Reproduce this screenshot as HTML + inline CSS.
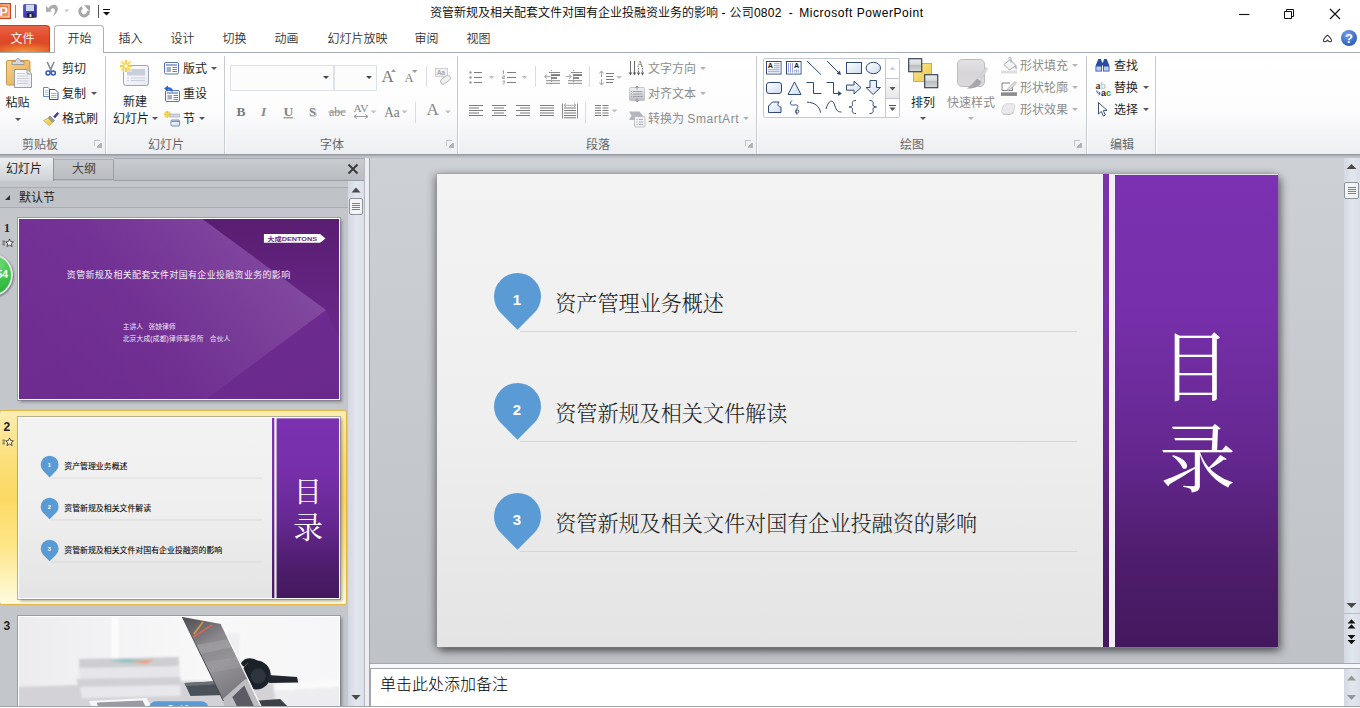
<!DOCTYPE html>
<html lang="zh-CN">
<head>
<meta charset="utf-8">
<title>PowerPoint</title>
<style>
*{box-sizing:border-box;margin:0;padding:0}
html,body{width:1360px;height:708px;overflow:hidden;background:#fff}
body{position:relative;font-family:"Liberation Sans","Noto Sans CJK SC",sans-serif;font-size:12px;color:#1e1e1e}
.a{position:absolute}
.t{position:absolute;white-space:nowrap;line-height:16px;font-size:12px}
.g{color:#8c8c8c}
/* title bar */
#title{left:0;top:0;width:1360px;height:25px;background:#fff}
#titletext{left:430px;top:5px;font-size:12px;color:#000;font-weight:350}
/* tab row */
#tabrow{left:0;top:25px;width:1360px;height:28px;background:#fff}
#filetab{left:0;top:25px;width:50px;height:27px;border-radius:0 4px 0 0;border:1px solid #c43c1c;border-left:none;border-bottom:none;background:radial-gradient(ellipse 40px 10px at 50% 100%,#f59a3c 0%,rgba(245,154,60,0) 100%),linear-gradient(#ea6446 0%,#e04c2c 45%,#d9431f 100%);color:#fff;text-align:center}
#hometab{left:54px;top:25px;width:50px;height:28px;border:1px solid #aab1b9;border-bottom:none;border-radius:4px 4px 0 0;background:#fff}
.tab{top:30.5px;font-size:12px;color:#333;margin-left:.5px;font-weight:350}
/* ribbon */
#ribbon{left:0;top:52px;width:1360px;height:102px;border-top:1px solid #a3aab2;background:linear-gradient(#ffffff 0%,#fdfdfe 55%,#eceef1 100%)}
.sep{top:56px;width:2px;height:98px;border-left:1px solid #c6cad1;border-right:1px solid #fff}
.gl{top:136.5px;color:#666;text-align:center}

.dd{width:0;height:0;border-left:3px solid transparent;border-right:3px solid transparent;border-top:3px solid #555}
.dd.lg{border-top-color:#b4b4b4}
.dl{width:6px;height:6px;border-left:1px solid #c0c4ca;border-top:1px solid #c0c4ca}
.dl:after{content:"";position:absolute;left:2px;top:2px;width:4px;height:4px;background:linear-gradient(135deg,transparent 50%,#aeb2b8 50%);border-right:1px solid #b4b8be;border-bottom:1px solid #b4b8be}
/* below ribbon */
#under{left:0;top:154px;width:1360px;height:4px;background:linear-gradient(#8e949b,#b9bdc3 60%,#c5c9ce)}

/* panel */
#panel{left:0;top:158px;width:365px;height:548px;background:#c3c6cb}
#ptabs{left:0;top:158px;width:365px;height:23px;background:linear-gradient(#c9ccd1,#b8bbc0)}
#ptab1{left:0;top:158px;width:54px;height:23px;background:linear-gradient(#eceef0,#d0d3d7 95%,#c9ccd1);border-right:1px solid #8f959c}
#ptab2{left:54px;top:159px;width:60px;height:21px;background:linear-gradient(#c6c9ce,#b9bcc1);border:1px solid #9ba0a7;border-left:none;border-top-color:#aeb2b8}
#ptabline{left:114px;top:180px;width:251px;height:1px;background:#9ba0a7;box-shadow:0 -22px 0 #a3a8af}
#sechead{left:0;top:187px;width:348px;height:21px;background:#bfc2c7;border-top:1px solid #a9adb3;border-bottom:1px solid #a9adb3}
#pscroll{left:348px;top:181px;width:17px;height:525px;background:linear-gradient(90deg,#d3d8e1,#e2e6ee 50%,#dadfe7)}
#split{left:364px;top:158px;width:6px;height:548px;background:#eceef1;border-left:1px solid #b4b8be;border-right:1px solid #9fa4ab}
#ws{left:370px;top:158px;width:974px;height:506px;background:linear-gradient(#cdd0d5 0%,#c6c9ce 50%,#bfc2c7 100%)}
#vscroll{left:1344px;top:158px;width:16px;height:506px;background:linear-gradient(90deg,#d3d8e1,#e2e6ee 50%,#dadfe7)}
#hsplit{left:370px;top:663px;width:990px;height:6px;background:#f7f8f9;border-top:1px solid #a4a9b0;border-bottom:1px solid #a4a9b0}
#notes{left:370px;top:669px;width:974px;height:37px;background:#fff;border-left:1px solid #a4a9b0}
#nscroll{left:1344px;top:669px;width:16px;height:37px;background:linear-gradient(90deg,#d3d8e1,#e2e6ee 50%,#dadfe7)}
#bottom{left:0;top:706px;width:1360px;height:2px;background:#fff;border-top:1px solid #9fa4ab}
.thumb{left:18px;width:322px;height:182px;border:1px solid #fff;box-shadow:0 0 0 1px rgba(120,125,132,.55),2px 2px 3px rgba(0,0,0,.32)}
#sel{left:-1px;top:410px;width:348px;height:195px;border:1px solid #e3b548;border-radius:3px;background:linear-gradient(180deg,#fdeeb3 0%,#fbdf79 25%,#fcd964 45%,#fde688 70%,#fffbe0 100%)}
.num{font-family:"Liberation Serif","Noto Serif CJK SC",serif;font-weight:bold;font-size:13px;color:#222}
/* slide */
#slide{left:437px;top:174px;width:841px;height:473px;background:linear-gradient(180deg,#f3f3f3 0%,#efefef 50%,#e4e4e4 100%);box-shadow:0 0 0 1px rgba(150,154,160,.35),3px 4px 8px rgba(0,0,0,.48),-3px 1px 8px rgba(0,0,0,.30)}
.purple{background:linear-gradient(180deg,#7b31b1 0%,#762fa9 30%,#652891 58%,#4e1d6c 82%,#44185e 100%)}
.stxt{font-family:"Liberation Serif","Noto Serif CJK SC",serif;font-size:21.1px;line-height:28px;color:#1c1c1c;font-weight:300}
.sline{height:1px;background:#d5d5d5}
.pin{width:47px;height:47px;border-radius:50% 50% 0 50%;background:#5b9bd5;transform:rotate(45deg)}
.pinn{font-family:"Liberation Sans",sans-serif;font-weight:bold;font-size:15px;color:#fff;width:47px;text-align:center;line-height:47px}
.mulu{font-family:"Liberation Serif","Noto Serif CJK SC",serif;font-size:77px;line-height:80px;color:#fff;width:163px;text-align:center;left:1115px}
</style>
</head>
<body>
<div class="a" id="title"></div>
<div class="t" id="titletext">资管新规及相关配套文件对国有企业投融资业务的影响<span id="tt1" style="letter-spacing:.25px"> - 公司0802&nbsp; -&nbsp; </span><span id="tt2" style="letter-spacing:.55px;margin-left:-1px">Microsoft PowerPoint</span></div>
<div class="a" id="tabrow"></div>
<div class="a" id="ribbon"></div>
<div class="a" id="filetab"></div>
<div class="a" id="hometab"></div>
<div class="t tab" style="left:10px;color:#fff">文件</div>
<div class="t tab" style="left:67px">开始</div>
<div class="t tab" style="left:118px">插入</div>
<div class="t tab" style="left:170px">设计</div>
<div class="t tab" style="left:222px">切换</div>
<div class="t tab" style="left:274px">动画</div>
<div class="t tab" style="left:327px">幻灯片放映</div>
<div class="t tab" style="left:414px">审阅</div>
<div class="t tab" style="left:466px">视图</div>

<!-- ribbon group separators -->
<div class="a sep" style="left:105px"></div>
<div class="a sep" style="left:224px"></div>
<div class="a sep" style="left:457px"></div>
<div class="a sep" style="left:756px"></div>
<div class="a sep" style="left:1086px"></div>
<div class="a sep" style="left:1155px"></div>
<!-- clipboard -->
<div class="t" style="left:5.5px;top:95.1px">粘贴</div>
<div class="a dd" style="left:15px;top:118px"></div>
<div class="t" style="left:62px;top:61.1px">剪切</div>
<div class="t" style="left:62px;top:86.1px">复制</div>
<div class="a dd" style="left:91px;top:92px"></div>
<div class="t" style="left:62px;top:111.1px">格式刷</div>
<div class="t gl" style="left:22px">剪贴板</div>
<div class="a dl" style="left:94px;top:140px"></div>
<!-- slides -->
<div class="t" style="left:123px;top:94.1px">新建</div>
<div class="t" style="left:113px;top:111.1px">幻灯片</div>
<div class="a dd" style="left:152px;top:117px"></div>
<div class="t" style="left:183px;top:61.1px">版式</div>
<div class="a dd" style="left:211px;top:67px"></div>
<div class="t" style="left:183px;top:86.1px">重设</div>
<div class="t" style="left:183px;top:111.1px">节</div>
<div class="a dd" style="left:199px;top:117px"></div>
<div class="t gl" style="left:148px">幻灯片</div>
<!-- font -->
<div class="a" style="left:230px;top:65px;width:104px;height:26px;border:1px solid #dde1e8;background:#fcfcfd"></div>
<div class="a" style="left:334px;top:65px;width:43px;height:26px;border:1px solid #dde1e8;background:#fcfcfd"></div>
<div class="a dd" style="left:323px;top:76px;border-top-color:#444"></div>
<div class="a dd" style="left:366px;top:76px;border-top-color:#444"></div>
<div class="t gl" style="left:320px">字体</div>
<div class="a dl" style="left:446px;top:140px"></div>
<!-- paragraph -->
<div class="t g" style="left:648px;top:61.1px">文字方向</div>
<div class="a dd lg" style="left:700px;top:67px"></div>
<div class="t g" style="left:648px;top:86.1px">对齐文本</div>
<div class="a dd lg" style="left:700px;top:92px"></div>
<div class="t g" style="left:648px;top:111.1px">转换为 <span style="letter-spacing:.55px">SmartArt</span></div>
<div class="a dd lg" style="left:743px;top:117px"></div>
<div class="t gl" style="left:586px">段落</div>
<div class="a dl" style="left:745px;top:140px"></div>
<!-- drawing -->
<div class="t" style="left:911px;top:94.6px">排列</div>
<div class="a dd" style="left:920px;top:117px"></div>
<div class="t g" style="left:947px;top:94.6px">快速样式</div>
<div class="a dd lg" style="left:968px;top:117px"></div>
<div class="t g" style="left:1020px;top:58.1px">形状填充</div>
<div class="a dd lg" style="left:1072px;top:64px"></div>
<div class="t g" style="left:1020px;top:80.1px">形状轮廓</div>
<div class="a dd lg" style="left:1072px;top:86px"></div>
<div class="t g" style="left:1020px;top:102.1px">形状效果</div>
<div class="a dd lg" style="left:1072px;top:108px"></div>
<div class="t gl" style="left:900px">绘图</div>
<div class="a dl" style="left:1074px;top:140px"></div>
<!-- editing -->
<div class="t" style="left:1114px;top:58.1px">查找</div>
<div class="t" style="left:1114px;top:80.1px">替换</div>
<div class="a dd" style="left:1143px;top:86px"></div>
<div class="t" style="left:1114px;top:102.1px">选择</div>
<div class="a dd" style="left:1143px;top:108px"></div>
<div class="t gl" style="left:1110px">编辑</div>

<!-- title bar icons -->
<svg class="a" style="left:0;top:0" width="130" height="25" viewBox="0 0 130 25">
<defs><linearGradient id="ppg" x1="0" y1="0" x2="1" y2="1"><stop offset="0" stop-color="#e5602a"/><stop offset="1" stop-color="#f6a36f"/></linearGradient>
<linearGradient id="svg1" x1="0" y1="0" x2="1" y2="1"><stop offset="0" stop-color="#5a5ad0"/><stop offset="1" stop-color="#2a2a8c"/></linearGradient></defs>
<rect x="-2" y="3.500" width="12.500" height="15" fill="url(#ppg)" stroke="#d4401c"/>
<rect x="-2" y="5" width="11" height="12" fill="none" stroke="#fbe3d4" stroke-width=".800"/>
<text x="-0.500" y="15.500" font-family="'Liberation Sans',sans-serif" font-weight="bold" font-size="12.500" fill="#fff">P</text>
<line x1="15.500" y1="5" x2="15.500" y2="18" stroke="#8a8a8a"/>
<rect x="23.500" y="4.500" width="13" height="13" rx="1" fill="url(#svg1)" stroke="#33338f" stroke-width=".600"/>
<rect x="26" y="4.800" width="8" height="6.200" fill="#e8eef8"/><rect x="26" y="4.800" width="8" height="6.200" fill="#b5c6e6" opacity=".5"/>
<rect x="27" y="13" width="6.500" height="4.500" fill="#23232f"/><rect x="29.500" y="14" width="2" height="3" fill="#d6d6e4"/>
<path d="M46.100 6.100 L46.100 11.900 L51.900 11.600 Z M48.300 8.300 C50 5.300 54.200 3.600 56.600 5.800 C59.200 8.300 57.800 13 52.500 16.700 C55 13 55.600 10.200 54.200 8.800 C53 7.700 51.300 8.600 50.400 10.300 Z" fill="#ababab"/>
<polygon points="64.300,9.500 69.300,9.500 66.800,12.300" fill="#c2c2c2"/>
<path d="M82.300 7.700 A4.300 4.300 0 1 0 88.300 10.850" fill="none" stroke="#a6a6a6" stroke-width="3"/><path d="M83.800 5.200 L90 5.200 L90 11.400 Z" fill="#a6a6a6"/>
<line x1="98.500" y1="5" x2="98.500" y2="18" stroke="#555"/>
<rect x="103" y="9" width="7" height="1" fill="#111"/><polygon points="103,12 110,12 106.500,15.500" fill="#111"/>
</svg>
<!-- window controls -->
<svg class="a" style="left:1220px;top:0" width="140" height="52" viewBox="1220 0 140 52">
<path d="M1239 14.500h10.500" stroke="#111" stroke-width="1.100"/>
<path d="M1284.500 11.500h7v7h-7z M1286.500 11.500v-2h7v7h-2" fill="none" stroke="#111" stroke-width="1"/>
<path d="M1330 9l10 10M1340 9l-10 10" stroke="#111" stroke-width="1.200"/>
<path d="M1323.500 41 C1323 39.500 1325.500 37 1327.500 35.200 C1329.500 37 1332 39.500 1331.500 41 C1331 42.300 1329 42 1327.500 40.200 C1326 42 1324 42.300 1323.500 41 Z" fill="#fff" stroke="#333" stroke-width="1.100"/>
<defs><radialGradient id="hg" cx=".4" cy=".3" r=".8"><stop offset="0" stop-color="#7fa3e6"/><stop offset=".6" stop-color="#3f6fcc"/><stop offset="1" stop-color="#2a55b0"/></radialGradient></defs>
<circle cx="1349" cy="38" r="8" fill="url(#hg)"/>
<text x="1349" y="42.800" text-anchor="middle" font-family="'Liberation Sans',sans-serif" font-weight="bold" font-size="13" fill="#fff">?</text>
</svg>

<!-- ribbon icons -->
<svg class="a" id="ricons" style="left:0;top:52px" width="1360" height="102" viewBox="0 52 1360 102">
<defs>
<linearGradient id="cb" x1="0" y1="0" x2="1" y2="1"><stop offset="0" stop-color="#f6d48f"/><stop offset="1" stop-color="#e3a94f"/></linearGradient>
<linearGradient id="pg" x1="0" y1="0" x2="1" y2="1"><stop offset="0" stop-color="#ffffff"/><stop offset="1" stop-color="#e6e9f0"/></linearGradient>
<linearGradient id="gy" x1="0" y1="0" x2="0" y2="1"><stop offset="0" stop-color="#f2f3f5"/><stop offset="1" stop-color="#b9bcc2"/></linearGradient>
<linearGradient id="yl" x1="0" y1="0" x2="1" y2="1"><stop offset="0" stop-color="#fbe38a"/><stop offset="1" stop-color="#e8c23f"/></linearGradient>
<linearGradient id="bl" x1="0" y1="0" x2="1" y2="1"><stop offset="0" stop-color="#ffffff"/><stop offset="1" stop-color="#cfdcf2"/></linearGradient>
</defs>
<!-- paste -->
<rect x="6.500" y="60.500" width="23.500" height="24.500" rx="1.500" fill="url(#cb)" stroke="#c79642"/>
<path d="M12 64.500 v-3 h3.500 c0-4 5-4 5 0 h3.500 v3 z" fill="#d5d7dc" stroke="#8c8f96" stroke-width=".800"/>
<path d="M14.500 69.500 h12.500 l4.500 4.500 v13.500 h-17 z" fill="url(#pg)" stroke="#8a93a6" stroke-width=".900"/>
<path d="M27 69.500 v4.500 h4.500" fill="#dfe3ec" stroke="#8a93a6" stroke-width=".800"/>
<path d="M17 73.500h8M17 76h11.500M17 78.500h11.500M17 81h11.500M17 83.500h11.500" stroke="#c3c8d3" stroke-width=".900"/>
<!-- cut -->
<path d="M47.300 62 L51.500 71.500 M54 62 L49.800 71.500" stroke="#7d8590" stroke-width="1.500" fill="none"/>
<circle cx="48" cy="73" r="2" fill="none" stroke="#2c56c8" stroke-width="1.500"/><circle cx="53.300" cy="73" r="2" fill="none" stroke="#2c56c8" stroke-width="1.500"/>
<!-- copy -->
<path d="M43.500 87.500 h4.500 l2.500 2.500 v6.500 h-7 z" fill="#fff" stroke="#5a78b8" stroke-width=".900"/>
<path d="M45 90.500h3.500M45 92.500h3.500M45 94.500h3.500" stroke="#7e9bd6" stroke-width=".600"/>
<path d="M49.500 89.500 h5.500 l3 3 v7 h-8.500 z" fill="#fff" stroke="#2a4ea6" stroke-width="1"/>
<path d="M51 93.500h5.500M51 95.500h5.500M51 97.500h5.500" stroke="#5a82d8" stroke-width=".600"/>
<!-- format painter -->
<path d="M53.500 116.500 L57.500 112.300 L58.800 113.600 L55 118 Z" fill="#3a3f9a" stroke="#2a2e78" stroke-width=".500"/>
<path d="M50 116 L54.500 120.500 L52.500 122.500 L48 118 Z" fill="#9a9ca5" stroke="#666a75" stroke-width=".500"/>
<path d="M48 118 L52.500 122.500 L49.500 125.500 C47.500 124.500 45 122 43.500 120.500 Z" fill="url(#yl)" stroke="#b4953a" stroke-width=".600"/>

<!-- new slide -->
<rect x="123.500" y="65.500" width="25" height="20" rx="2" fill="url(#pg)" stroke="#9aa5bf"/>
<rect x="127" y="69" width="18" height="6.500" fill="#c9cedb"/>
<path d="M127 78h2M130.500 78h14.500M127 80.500h2M130.500 80.500h14.500" stroke="#c4cad8" stroke-width=".900"/>
<rect x="120" y="60" width="12" height="12" fill="#fdf3b8" opacity=".55"/>
<path d="M120.0 66.0 L132.0 66.0" stroke="#f2c52e" stroke-width="1.6"/><path d="M126.0 60.0 L126.0 72.0" stroke="#f2c52e" stroke-width="1.6"/><path d="M121.7 61.7 L130.3 70.3" stroke="#f6d24e" stroke-width="1.4"/><path d="M121.7 70.3 L130.3 61.7" stroke="#f6d24e" stroke-width="1.4"/><circle cx="126" cy="66" r="1.800" fill="#fffbe0"/>
<!-- layout -->
<rect x="164.500" y="62.500" width="14" height="11.500" rx="1.500" fill="#fff" stroke="#5674b4"/>
<path d="M166 65h11" stroke="#5674b4" stroke-width="1.200"/>
<rect x="166.500" y="67" width="4.500" height="5" fill="#a9afbe"/>
<path d="M172.500 67.500h4.500M172.500 69.500h4.500M172.500 71.500h4.500" stroke="#5674b4" stroke-width=".900"/>
<!-- reset -->
<rect x="165.500" y="90.500" width="14" height="11" rx="1.500" fill="#fff" stroke="#5674b4"/>
<path d="M167 93h11" stroke="#5674b4" stroke-width="1.200"/>
<rect x="167.500" y="95" width="4.500" height="4.500" fill="#a9afbe"/>
<path d="M173.500 95.500h4.500M173.500 97.500h4.500M173.500 99.500h4.500" stroke="#5674b4" stroke-width=".900"/>
<path d="M164 88.500 L168 85.500 L168 87.300 C171 87 173 89 173 91.500 L171 91.500 C171 90 170 89.500 168 89.700 L168 91.500 Z" fill="#2f62d6"/>
<!-- section -->
<rect x="164" y="111" width="7" height="7" fill="#fdf3b8" opacity=".5"/>
<path d="M163.9 114.3 L170.7 114.3" stroke="#f2c52e" stroke-width="1.6"/><path d="M167.3 110.9 L167.3 117.7" stroke="#f2c52e" stroke-width="1.6"/><path d="M164.9 111.9 L169.7 116.7" stroke="#f6d24e" stroke-width="1.4"/><path d="M164.9 116.7 L169.7 111.9" stroke="#f6d24e" stroke-width="1.4"/>
<rect x="170" y="114" width="9.500" height="3" fill="#d5d8df" stroke="#9aa2b4" stroke-width=".600"/>
<rect x="171" y="120" width="8.500" height="6" rx="1" fill="url(#bl)" stroke="#6f86b8" stroke-width=".900"/>
<path d="M171.500 121.300h7.500" stroke="#6f86b8" stroke-width="1.200"/>

<!-- font group -->
<g font-family="'Liberation Serif',serif" fill="#7a7a7a">
<text x="381.500" y="82.300" font-size="17">A</text>
<text x="404.500" y="82.300" font-size="12.500">A</text>
<text x="236.500" y="116" font-size="13.500" font-weight="bold">B</text>
<text x="261" y="116" font-size="13.500" font-style="italic" font-weight="bold" fill="#8a8a8a">I</text>
<text x="283.500" y="116" font-size="13.500" font-weight="bold" fill="#858585">U</text>
<text x="310.200" y="116.800" font-size="12.500" font-weight="bold" fill="#c4c4c4">S</text>
<text x="309" y="115.500" font-size="12.500" font-weight="bold" fill="#858585">S</text>
<text x="329" y="116" font-size="12.500" fill="#8a8a8a" textLength="16.500" lengthAdjust="spacingAndGlyphs">abc</text>
<text x="353.500" y="112" font-size="10.500" fill="#858585" textLength="15" lengthAdjust="spacingAndGlyphs">AV</text>
<text x="384.200" y="117" font-size="14" textLength="15.500" lengthAdjust="spacingAndGlyphs">Aa</text>
<text x="426.500" y="115" font-size="17" fill="#858585">A</text>
</g>
<path d="M283.500 117.800h9.500" stroke="#7a7a7a" stroke-width="1"/>
<path d="M328.500 112h17.500" stroke="#8a8a8a" stroke-width=".900"/>
<path d="M354.500 116.500h13M356.800 114.500l-2.800 2l2.800 2M365.200 114.500l2.800 2l-2.800 2" stroke="#9a9a9a" stroke-width="1" fill="none"/>
<polygon points="391,72 396,72 393.500,69" fill="#9a9a9a"/>
<polygon points="412,70 417.500,70 414.700,73" fill="#9a9a9a"/>
<path d="M426.500 66v21" stroke="#d9dce2"/><path d="M415.500 102v21" stroke="#d9dce2"/>
<path d="M535.500 66v21" stroke="#d9dce2"/><path d="M589.500 66v21" stroke="#d9dce2"/><path d="M585.500 102v21" stroke="#d9dce2"/>
<polygon points="370.500,110.500 376.500,110.500 373.500,113.500" fill="#c2c2c2"/>
<polygon points="401.500,110.500 407.500,110.500 404.500,113.500" fill="#c2c2c2"/>
<polygon points="445,110.500 451,110.500 448,113.500" fill="#c2c2c2"/>
<rect x="435.500" y="68.500" width="12" height="8" fill="#f1f1f3" stroke="#c6c6cb" stroke-width=".800"/>
<text x="437" y="75.300" font-family="'Liberation Sans',sans-serif" font-size="6.500" fill="#8a8a8a">Aa</text>
<rect x="440" y="77" width="11" height="5.500" rx="2.700" transform="rotate(-35 445.500 79.700)" fill="#f0f0f2" stroke="#b4b4ba" stroke-width=".900"/>
<!-- paragraph -->
<circle cx="470.500" cy="72.5" r="1.200" fill="#9a9a9a"/><circle cx="470.500" cy="77.5" r="1.200" fill="#9a9a9a"/><circle cx="470.500" cy="82.5" r="1.200" fill="#9a9a9a"/>
<path d="M474.0 72.5H482.0M474.0 77.5H482.0M474.0 82.5H482.0" stroke="#7d7d7d" stroke-width="1.1" fill="none"/>
<polygon points="488.500,76 494.500,76 491.500,79" fill="#c2c2c2"/>
<path d="M503.500 70.500v3.500M502.500 71.500l1-1M502.500 75.800h2v1.300h-2v1.400h2.300M502.500 81h2.300l-1.200 1.300c1.500 0 1.500 2-1.200 1.700" stroke="#909090" stroke-width=".800" fill="none"/>
<path d="M507.0 72.5H516.0M507.0 77.5H516.0M507.0 82.5H516.0" stroke="#7d7d7d" stroke-width="1.1" fill="none"/>
<polygon points="521.500,76 527.500,76 524.500,79" fill="#c2c2c2"/>
<path d="M549.0 72.5H560.0M551.0 75.2H560.0M551.0 78.0H557.0M546.0 80.7H560.0M546.0 83.3H560.0" stroke="#8a8a8a" stroke-width="1" fill="none"/>
<path d="M551.0 75.200H560.0M551.0 78H557.0" stroke="#777" stroke-width="1.700"/>
<path d="M551.5 70v15" stroke="#888" stroke-width=".800" stroke-dasharray="1 1.200"/>
<path d="M544.5 76.600h6M547.0 74.600l-2.500 2l2.500 2" stroke="#a8a8a8" stroke-width="1" fill="none"/>
<path d="M571.0 72.5H582.0M573.0 75.2H582.0M573.0 78.0H579.0M568.0 80.7H582.0M568.0 83.3H582.0" stroke="#8a8a8a" stroke-width="1" fill="none"/>
<path d="M573.0 75.200H582.0M573.0 78H579.0" stroke="#777" stroke-width="1.700"/>
<path d="M573.5 70v15" stroke="#888" stroke-width=".800" stroke-dasharray="1 1.200"/>
<path d="M565.5 76.600h6M569.0 74.600l2.500 2l-2.500 2" stroke="#a8a8a8" stroke-width="1" fill="none"/>
<path d="M601.500 71v6M599.300 73.500l2.200-2.500l2.200 2.500M601.500 79v6M599.300 82.500l2.200 2.500l2.200-2.500" stroke="#a0a0a0" stroke-width="1" fill="none"/>
<path d="M606.0 73.5H614.0M606.0 76.5H613.0M606.0 79.5H614.0M606.0 82.5H613.0" stroke="#7d7d7d" stroke-width="1.1" fill="none"/>
<polygon points="616,76 622,76 619,79" fill="#c2c2c2"/>
<path d="M469.0 105.5H483.0M469.0 108.0H479.0M469.0 110.5H483.0M469.0 113.0H479.0M469.0 115.5H483.0" stroke="#7d7d7d" stroke-width="1.1" fill="none"/>
<path d="M492.0 105.5H506.0M494.0 108.0H504.0M492.0 110.5H506.0M494.0 113.0H504.0M492.0 115.5H506.0" stroke="#7d7d7d" stroke-width="1.1" fill="none"/>
<path d="M516.0 105.5H530.0M520.0 108.0H530.0M516.0 110.5H530.0M520.0 113.0H530.0M516.0 115.5H530.0" stroke="#7d7d7d" stroke-width="1.1" fill="none"/>
<path d="M540.0 105.5H554.0M540.0 108.0H554.0M540.0 110.5H554.0M540.0 113.0H554.0M540.0 115.5H554.0" stroke="#7d7d7d" stroke-width="1.1" fill="none"/>
<path d="M564.0 108.0H576.0M564.0 110.5H576.0M564.0 113.0H576.0M564.0 115.5H576.0M564.0 117.8H576.0" stroke="#7d7d7d" stroke-width="1.1" fill="none"/>
<path d="M562.500 103.500v15M577.500 103.500v15" stroke="#8a8a8a" stroke-width="1"/><path d="M564 105.300h12M566 103.500l-2 1.800l2 1.800M574 103.500l2 1.800l-2 1.800" stroke="#a0a0a0" stroke-width=".900" fill="none"/>
<path d="M595.0 105.5H601.0M595.0 108.0H601.0M595.0 110.5H601.0M595.0 113.0H601.0M595.0 115.5H601.0" stroke="#7d7d7d" stroke-width="1.1" fill="none"/>
<path d="M602.5 105.5H608.5M602.5 108.0H608.5M602.5 110.5H608.5M602.5 113.0H608.5M602.5 115.5H608.5" stroke="#7d7d7d" stroke-width="1.1" fill="none"/>
<polygon points="611.500,109.500 617.500,109.500 614.500,112.500" fill="#c2c2c2"/>
<!-- text direction etc -->
<path d="M630.500 61v13M634.500 61v13" stroke="#6e6e6e" stroke-width="1"/>
<path d="M638.500 68v6M642.500 68v6" stroke="#6e6e6e" stroke-width="1" stroke-dasharray="1.500 1"/>
<path d="M628.800 72.500l1.700 3l1.700-3zM632.800 72.500l1.700 3l1.700-3zM636.800 72.500l1.700 3l1.700-3zM640.800 72.500l1.700 3l1.700-3z" fill="#555"/>
<text x="636.800" y="67.300" font-family="'Liberation Serif',serif" font-size="9" fill="#666">A</text>
<rect x="629.500" y="87.500" width="15" height="13" rx="1" fill="url(#gy)" stroke="#b9bbc1" stroke-width=".800"/>
<path d="M631 91.500h1M633 91.500h9.500M631 94h1M633 94h9.500M631 96.500h1M633 96.500h9.500" stroke="#9a9ca3" stroke-width=".900"/>
<path d="M637 86v3.500M635.500 87.700l1.500-1.700l1.500 1.700M637 98.500v3.500M635.500 100.300l1.500 1.700l1.500-1.700" stroke="#8a8a8a" stroke-width=".900" fill="none"/>
<path d="M629 111.500h10.500l3.500 4.200l-3.500 4.300h-10.500l2.500-4.300z" fill="#b4b6bb"/>
<rect x="634.500" y="116.500" width="10.500" height="10.500" rx="1" fill="#f2f2f4" stroke="#b5b7bd" stroke-width=".800"/>
<path d="M636.500 119.500h1.200M639 119.500h4M636.500 122h1.200M639 122h4M636.500 124.500h1.200M639 124.500h4" stroke="#a6a8ae" stroke-width=".900"/>
<!-- shapes gallery -->
<rect x="763.500" y="58.500" width="136" height="59" rx="1.500" fill="#fff" stroke="#c4c9d1"/>
<path d="M885.500 59v58M885.500 78.500h14M885.500 98.500h14" stroke="#c4c9d1"/>
<rect x="886" y="79" width="13" height="19" fill="url(#gy)" opacity=".35"/>
<polygon points="889.500,70 895.500,70 892.500,66.500" fill="#d0d3d8"/>
<polygon points="889.500,87 895.500,87 892.500,90.500" fill="#555"/>
<path d="M889 105.500h7" stroke="#555" stroke-width="1"/><polygon points="889.500,107.500 895.500,107.500 892.500,111" fill="#555"/>
<g fill="url(#bl)" stroke="#2f4a78" stroke-width="1">
<rect x="766.500" y="61.500" width="14.500" height="12.500"/>
<rect x="786.500" y="61.500" width="14.500" height="12.500"/>
<rect x="846.500" y="62.500" width="15" height="11"/>
<ellipse cx="873.300" cy="68" rx="7.200" ry="5.700"/>
<rect x="766.500" y="82.500" width="15" height="11" rx="2.500"/>
<path d="M794.500 82 L801 94.500 H788 Z"/>
<path d="M846.500 85 h7.500 v-3.800 l7 6.400 l-7 6.400 v-3.800 h-7.500 z"/>
<path d="M870 80.500 h6.500 v7 h4 l-7.300 7 l-7.200-7 h4 z"/>
<path d="M768.500 112.500 v-6.500 l4-4 h6.500 c-2.500 3 0 5 2 5 v5.500 z"/>
</g>
<g fill="none" stroke="#2f4a78" stroke-width="1">
<path d="M807 61 L821 74.700"/>
<path d="M827 61 L840 74"/>
<path d="M806.500 82.500 h7 v11 h8"/>
<path d="M826.500 82.500 h7 v11 h6.500"/>
<path d="M792 100.500 c-4 4 0 5 2.500 4.500 c3-.5 4.500 1 2.500 3.500 c-2 2.500-1.500 5 .5 4.500 c2-.5 1.500-3.500-.5-3 c-1.500.5-1.500 3 0 4.500"/>
<path d="M807 102.200 c7 0 13 4 13.500 10.500"/>
<path d="M826 109 c3-10 7-10 9-3 c1.500 5 3 6 6.500 6"/>
<path d="M856 100.500 c-5 0-3.500 3-3.500 4.500 c0 1.500-1.500 2-3.500 2 c2 0 3.500.5 3.500 2 c0 1.500-1.500 4.500 3.500 4.500"/>
<path d="M869.500 100.500 c5 0 3.500 3 3.500 4.500 c0 1.500 1.500 2 3.500 2 c-2 0-3.500.5-3.500 2 c0 1.500 1.500 4.500-3.500 4.500"/>
</g>
<polygon points="841,75 836.500,73.800 839.800,70.500" fill="#2f4a78"/>
<polygon points="842,93.500 838,91 838,96" fill="#2f4a78"/>
<rect x="767" y="62" width="13.500" height="11.500" fill="#fff" opacity=".75"/><rect x="787" y="62" width="13.500" height="11.500" fill="#fff" opacity=".75"/>
<text x="767.800" y="68.300" font-family="'Liberation Sans',sans-serif" font-weight="bold" font-size="7.200" fill="#1a1a1a">A</text>
<path d="M774 63.700h5.500M774 65.700h5.500M774 67.700h5.500M768 69.700h11.500M768 71.700h11.500" stroke="#6f80c8" stroke-width=".700"/>
<text x="794" y="68.300" font-family="'Liberation Sans',sans-serif" font-weight="bold" font-size="7.200" fill="#1a1a1a">A</text>
<path d="M788.500 63v9.500M790.500 63v9.500M792.500 63v9.500M794.800 69.500v3M796.500 69.500v3M798.200 69.500v3" stroke="#6f80c8" stroke-width=".700"/>
<!-- arrange / quick styles -->
<defs>
<linearGradient id="sq" x1="0" y1="0" x2="0" y2="1"><stop offset="0" stop-color="#eceeed"/><stop offset=".48" stop-color="#d4d7d8"/><stop offset=".52" stop-color="#b9bec1"/><stop offset="1" stop-color="#d9dcde"/></linearGradient>
<linearGradient id="yq" x1="0" y1="0" x2="1" y2="1"><stop offset="0" stop-color="#fbe58b"/><stop offset="1" stop-color="#edc84e"/></linearGradient>
<linearGradient id="qs" x1="0" y1="0" x2="0" y2="1"><stop offset="0" stop-color="#e5e2e6"/><stop offset=".5" stop-color="#d8d5d9"/><stop offset="1" stop-color="#dcd9dd"/></linearGradient>
</defs>
<rect x="913.500" y="63.500" width="18" height="18" fill="url(#yq)" stroke="#d3ad3c"/>
<rect x="908.700" y="58.700" width="13" height="13" fill="url(#sq)" stroke="#3b4555" stroke-width="1.200"/>
<rect x="924.700" y="74.700" width="13" height="13" fill="url(#sq)" stroke="#3b4555" stroke-width="1.200"/>
<rect x="957.500" y="59.500" width="27" height="27" rx="4.500" fill="url(#qs)" stroke="#bebbc0"/>
<path d="M985.600 67.300 L987.800 69 L980.300 80.300 L977.800 78.500 Z" fill="#d4d3d7" stroke="#c3c2c6" stroke-width=".400"/>
<path d="M977.300 78.600 L981.500 81.800 C980 85 977.500 87 975.500 87.600 C972.500 88.500 969.500 88.600 967 88.500 C971 86 973.500 82.500 977.300 78.600 Z" fill="#a8a7ab"/>
<path d="M978.300 78.200 L980.800 80.100" stroke="#f0f0f2" stroke-width="1"/>
<!-- shape fill/outline/effects -->
<path d="M1004 64.500 L1010 59.500 L1016 65.500 L1009.500 70 Z" fill="#f4f4f6" stroke="#9a9a9f" stroke-width=".900"/>
<path d="M1008.500 58.500 c0-1.500 2.500-1.500 2.500 0 v4" fill="none" stroke="#9a9a9f" stroke-width=".900"/>
<path d="M1015.500 65 c1.500 1 1.500 3.500 .8 5 c-1-1.500-1.500-3-.8-5z" fill="#a8a8ad"/>
<rect x="1001" y="70.500" width="16" height="3" fill="#dedde0"/>
<path d="M1010 83h-8v7.500h10.500v-3" fill="none" stroke="#808085" stroke-width="1"/>
<path d="M1015 81.500 l1.500 1.500 l-7 7 l-2.300 .8 l.8-2.300 z" fill="#e2e2e5" stroke="#9b9ba0" stroke-width=".700"/>
<rect x="1001" y="92.300" width="16" height="3.600" fill="#8c8c90"/>
<path d="M1003 106 l3-2.300 h7.500 l1.500 2 l-1.500 6 l-3 2.300 h-7 l-2-2.300 z" fill="#e9e8eb" stroke="#cfced2" stroke-width=".800"/>
<path d="M1001.500 111.700 l2 2.300 h7 l3-2.300 l.3 1.300 l-3 2 h-7.500z" fill="#c9c8cc"/>
<!-- find -->
<path d="M1098.300 59 h2.700 l1 3.500 v9 h-6.500 v-5.500 z M1106.700 59 h-2.700 l-1 3.500 v9 h6.500 v-5.500 z" fill="#2a4ca4"/>
<rect x="1101.500" y="62.500" width="2" height="3" fill="#2a4ca4"/>
<rect x="1096.300" y="66.500" width="4.900" height="4.200" fill="#bccbee"/><rect x="1103.800" y="66.500" width="4.900" height="4.200" fill="#bccbee"/>
<!-- replace -->
<g font-family="'Liberation Serif',serif" font-size="10"><text x="1095.600" y="89" font-weight="bold" fill="#3a3a3a">a</text><text x="1100.800" y="89" fill="#b0b0b0">b</text></g>
<g font-family="'Liberation Sans',sans-serif" font-size="9" font-weight="bold"><text x="1101" y="96.300" fill="#222">a</text><text x="1106" y="96.300" fill="#1e9a2e">c</text></g>
<path d="M1096.800 90.500 c0 2.500 1 3 3 3 M1098.500 91.800 l1.800 1.700 l-1.800 1.700" fill="none" stroke="#2c56c8" stroke-width="1"/>
<!-- select -->
<path d="M1098.500 102.500 v11.500 l2.800-2.600 l2 4.600 l2-.9 l-2-4.500 l3.800-.2 z" fill="#fff" stroke="#2d3f66" stroke-width=".900"/>
</svg>



<div class="a" id="under"></div>

<!-- left panel -->
<div class="a" id="panel"></div>
<div class="a" id="ptabs"></div>
<div class="a" id="ptabline"></div>
<div class="a" id="ptab2"></div>
<div class="a" id="ptab1"></div>
<div class="t" style="left:6px;top:161px;color:#222">幻灯片</div>
<div class="t" style="left:72px;top:161px;color:#444">大纲</div>
<div class="a" id="sechead"></div>
<div class="t" style="left:19px;top:190px;color:#222">默认节</div>
<div class="a" id="pscroll"></div>
<div class="a" id="sel"></div>
<div class="t num" style="left:4px;top:219.500px;font-size:12px">1</div>
<div class="t num" style="left:3.500px;top:418.500px;font-size:12px;font-family:'Liberation Sans',sans-serif">2</div>
<div class="t num" style="left:3.500px;top:617.500px;font-size:12px;font-family:'Liberation Sans',sans-serif">3</div>
<div class="a thumb" id="th1" style="top:218px;background:#6f2c91"></div>
<div class="a thumb" id="th2" style="top:417px;background:#eee"></div>
<div class="a thumb" id="th3" style="top:615.5px;height:91px;border-bottom:none;background:#eceef0"></div>
<svg class="a" style="left:19px;top:219px" width="320" height="180" viewBox="0 0 321 180" preserveAspectRatio="none">
<defs>
<linearGradient id="t1a" gradientUnits="userSpaceOnUse" x1="40" y1="170" x2="300" y2="10"><stop offset="0" stop-color="#fff" stop-opacity="0"/><stop offset=".35" stop-color="#fff" stop-opacity=".02"/><stop offset="1" stop-color="#fff" stop-opacity=".17"/></linearGradient>
<linearGradient id="t1b" x1="0" y1="0" x2="0" y2="1"><stop offset="0" stop-color="#591d70"/><stop offset=".6" stop-color="#632481"/><stop offset="1" stop-color="#6a298b"/></linearGradient>
<linearGradient id="t1c" x1="0" y1="0" x2="1" y2="1"><stop offset="0" stop-color="#722f95"/><stop offset="1" stop-color="#6a298c"/></linearGradient>
</defs>
<rect width="321" height="180" fill="url(#t1c)"/>
<polygon points="184,0 321,0 321,120 308,91" fill="url(#t1b)"/>
<polygon points="0,0 184,0 306,89.5 308,91 306,92.5 188,180 0,180" fill="url(#t1a)"/>
<polygon points="245.700,15 302,15 307.500,19.400 302,23.800 245.700,23.800" fill="#fff"/>
<text x="249" y="21.600" font-family="'Liberation Sans','Noto Sans CJK SC',sans-serif" font-weight="bold" font-size="5.600" fill="#6a2c8e" textLength="50" lengthAdjust="spacingAndGlyphs">大成DENTONS</text>
<text x="48" y="59.200" font-family="'Liberation Sans','Noto Sans CJK SC',sans-serif" font-size="9" fill="#f4eef8" textLength="224">资管新规及相关配套文件对国有企业投融资业务的影响</text>
<text x="104" y="110" font-family="'Liberation Sans','Noto Sans CJK SC',sans-serif" font-size="6.800" fill="#eee4f4" xml:space="preserve">主讲人   张缺律师</text>
<text x="104" y="122" font-family="'Liberation Sans','Noto Sans CJK SC',sans-serif" font-size="6.800" fill="#eee4f4" xml:space="preserve" textLength="108">北京大成(成都)律师事务所   合伙人</text>
</svg>
<svg class="a" style="left:19px;top:418px" width="320" height="180" viewBox="0 0 841 472" preserveAspectRatio="none">
<defs>
<linearGradient id="t2bg" x1="0" y1="0" x2="0" y2="1"><stop offset="0" stop-color="#f3f3f3"/><stop offset=".5" stop-color="#efefef"/><stop offset="1" stop-color="#e4e4e4"/></linearGradient>
<linearGradient id="t2p" x1="0" y1="0" x2="0" y2="1"><stop offset="0" stop-color="#7b31b1"/><stop offset=".3" stop-color="#762fa9"/><stop offset=".58" stop-color="#652891"/><stop offset=".82" stop-color="#4e1d6c"/><stop offset="1" stop-color="#44185e"/></linearGradient>
</defs>
<rect width="841" height="472" fill="url(#t2bg)"/>
<rect x="665" y="0" width="6" height="472" fill="url(#t2p)"/>
<rect x="677" y="1" width="164" height="471" fill="url(#t2p)"/>
<g stroke="#d4d4d4" stroke-width="2"><line x1="83" y1="157.500" x2="640" y2="157.500"/><line x1="83" y1="267.500" x2="640" y2="267.500"/><line x1="83" y1="377.500" x2="640" y2="377.500"/></g>
<g fill="#5b9bd5">
<path d="M80.500 155.700 L63.900 139.100 A23.500 23.500 0 1 1 97.100 139.100 Z"/>
<path d="M80.500 265.700 L63.900 249.100 A23.500 23.500 0 1 1 97.100 249.100 Z"/>
<path d="M80.500 375.700 L63.900 359.100 A23.500 23.500 0 1 1 97.100 359.100 Z"/>
</g>
<g font-family="'Liberation Sans',sans-serif" font-weight="bold" font-size="15" fill="#fff" text-anchor="middle"><text x="80" y="128">1</text><text x="80" y="238">2</text><text x="80" y="348">3</text></g>
<g font-family="'Liberation Sans','Noto Sans CJK SC',sans-serif" font-size="20.800" fill="#000" stroke="#000" stroke-width=".2">
<text x="119" y="134">资产管理业务概述</text>
<text x="119" y="244">资管新规及相关文件解读</text>
<text x="119" y="354">资管新规及相关文件对国有企业投融资的影响</text>
</g>
<g font-family="'Liberation Serif','Noto Serif CJK SC',serif" font-size="76" fill="#fff" text-anchor="middle"><text x="759" y="219" font-size="74">目</text><text x="760" y="314" font-size="78">录</text></g>
</svg>
<svg class="a" style="left:19px;top:616.5px" width="320" height="90" viewBox="0 0 321 90" preserveAspectRatio="none">
<defs>
<filter id="bl1" x="-10%" y="-10%" width="120%" height="120%"><feGaussianBlur stdDeviation="1.300"/></filter>
<filter id="bl2" x="-10%" y="-10%" width="120%" height="120%"><feGaussianBlur stdDeviation=".600"/></filter>
<linearGradient id="t3bg" x1="0" y1="0" x2="1" y2="0"><stop offset="0" stop-color="#ececee"/><stop offset=".3" stop-color="#f3f3f5"/><stop offset=".6" stop-color="#f8f8f9"/><stop offset="1" stop-color="#f6f6f8"/></linearGradient>
<linearGradient id="t3scr" gradientUnits="userSpaceOnUse" x1="175" y1="0" x2="225" y2="85"><stop offset="0" stop-color="#56545a"/><stop offset=".3" stop-color="#8a888d"/><stop offset=".55" stop-color="#959398"/><stop offset="1" stop-color="#727076"/></linearGradient>
</defs>
<rect width="321" height="90" fill="url(#t3bg)"/>
<g filter="url(#bl1)">
<rect x="93" y="-3" width="7" height="62" fill="#fcfcfd"/>
<polygon points="-5,70 175,64 330,68 330,95 -5,95" fill="#d3d3d7"/>
<rect x="208" y="16" width="13" height="58" rx="3" fill="#efeef1"/>
<polygon points="60,42 160,40 161,57 61,59" fill="#cdcdd2"/>
<polygon points="61,51 161,49 161,62 61,64" fill="#e6e6ea"/>
<polygon points="58,62 162,60 162,77 61,79" fill="#d0d0d5"/>
<polygon points="61,70 162,68 162,79 63,81" fill="#e8e8ec"/>
<polygon points="88,44 108,42 130,43 112,46" fill="#8fc5bf"/>
<polygon points="112,45 136,42 128,47" fill="#eba083"/>
<polygon points="255,67 330,62 330,70 256,74" fill="#fafafb"/><polygon points="256,74 330,70 330,95 258,95" fill="#ededf0"/>
</g>
<g filter="url(#bl2)">
<polygon points="166,66 203,64 207,78 172,79" fill="#4c5159"/>
<polygon points="166,66 203,64 204,67 167,69" fill="#6a6f78"/>
<circle cx="238" cy="58" r="14.500" fill="#1f242a"/>
<circle cx="240" cy="59" r="7.500" fill="#2f363e"/>
<path d="M222 47 C226 40 234 40 240 44 L236 47 C232 45 228 46 226 50 Z" fill="#1f242a"/>
<path d="M250 58 L279 60 L280 65.500 L251 66 Z" fill="#22272d"/>
<polygon points="70,84 128,81 134,92 74,92" fill="#f7f7f9"/>
<polygon points="78,85.500 124,83.500 128,92 80,92" fill="#9a9aa2"/>
<polygon points="232,84 262,82 270,90 236,90" fill="#3c4047"/>
</g>
<polygon points="204,82 227,61.500 230,62 243,90 206,90" fill="#bdbdc2"/>
<polygon points="214,80 226,68.500 236,90 219,90" fill="#4a4a52" opacity=".85"/>
<polygon points="164,0 202.700,7 230,63 227,62 204,82.500" fill="url(#t3scr)"/>
<polygon points="178,28 210,22 214,30 182,37" fill="#b9b7bc" opacity=".35"/>
<polygon points="186,45 220,40 225,50 191,56" fill="#a9a7ac" opacity=".3"/>
<path d="M174 20.500 L194 7.800" stroke="#e0664c" stroke-width="1.800" opacity=".9"/>
<path d="M175.500 17 L184.500 5" stroke="#e2a23a" stroke-width="1.500" opacity=".9"/>
<line x1="163.800" y1="0" x2="205" y2="84" stroke="#2e3a35" stroke-width=".800"/>
<line x1="203" y1="7" x2="243.500" y2="91" stroke="#fbfbfb" stroke-width="1.300"/>
<rect x="130.500" y="84.300" width="59.500" height="14" rx="7" fill="#5b9bd5"/>
<text x="160" y="92.800" font-family="'Liberation Sans',sans-serif" font-weight="bold" font-size="7.500" fill="#fff" text-anchor="middle">Part 1</text>
</svg>

<!-- green circle -->
<div class="a" style="left:-31px;top:253px;width:44px;height:44px;border-radius:50%;background:#dfe1e4;box-shadow:1px 1px 2px rgba(0,0,0,.4)"></div>
<div class="a" style="left:-29px;top:255px;width:40px;height:40px;border-radius:50%;background:radial-gradient(circle at 60% 25%,#7be07f 0%,#3cc24a 45%,#23a335 100%)"></div>
<div class="t" style="left:-3.500px;top:266px;font-family:'Liberation Sans',sans-serif;font-weight:bold;font-size:10.500px;color:#fff">54</div>
<!-- star icons -->
<svg class="a" style="left:1.500px;top:237.500px" width="12" height="10" viewBox="0 0 13 11"><path d="M8.200 1 L9.500 4 L12.500 4.200 L10.200 6.200 L11 9.500 L8.200 7.700 L5.400 9.500 L6.200 6.200 L3.900 4.200 L6.900 4 Z" fill="#f4f4f4" stroke="#333" stroke-width=".900"/><path d="M.5 3.500h2.500M.5 5.500h2.500M.5 7.500h2.500" stroke="#333" stroke-width=".900"/></svg>
<svg class="a" style="left:1.500px;top:436.500px" width="12" height="10" viewBox="0 0 13 11"><path d="M8.200 1 L9.500 4 L12.500 4.200 L10.200 6.200 L11 9.500 L8.200 7.700 L5.400 9.500 L6.200 6.200 L3.900 4.200 L6.900 4 Z" fill="#fff6d0" stroke="#333" stroke-width=".900"/><path d="M.5 3.500h2.500M.5 5.500h2.500M.5 7.500h2.500" stroke="#333" stroke-width=".900"/></svg>
<div class="a" id="split"></div>
<!-- workspace -->
<div class="a" id="ws"></div>
<div class="a" id="vscroll"></div>
<div class="a" id="hsplit"></div>
<div class="a" id="notes"></div>
<div class="a" id="nscroll"></div>
<div class="t" style="left:380px;top:675.200px;font-size:16px;line-height:20px;color:#000;font-weight:300">单击此处添加备注</div>

<!-- scrollbar parts -->
<svg class="a" style="left:0;top:158px" width="1360" height="550" viewBox="0 158 1360 550">
<g fill="#4a4a4a">
<polygon points="351.500,192.500 360.500,192.500 356,187.500"/>
<polygon points="351.500,695 360.500,695 356,700"/>
<polygon points="1346.500,169 1356.500,169 1351.500,164"/>
<polygon points="1346.500,603 1356.500,603 1351.500,608"/>
</g>
<g fill="#111">
<polygon points="1347.500,623.500 1355.500,623.500 1351.500,619.300"/><polygon points="1347.500,628.500 1355.500,628.500 1351.500,624.300"/>
<polygon points="1347.500,635 1355.500,635 1351.500,639.200"/><polygon points="1347.500,640 1355.500,640 1351.500,644.200"/>
</g>
<g fill="#8e9a99">
<polygon points="1347,680.500 1356,680.500 1351.500,675.500"/>
<polygon points="1347,695 1356,695 1351.500,700"/>
</g>
<line x1="1344" y1="613.500" x2="1360" y2="613.500" stroke="#b9bdc4"/>
<g fill="#f4f5f7" stroke="#8d939b"><rect x="349.500" y="198.500" width="13" height="16" rx="1.500"/><rect x="1344.500" y="182.500" width="14" height="16" rx="1.500"/></g>
<g stroke="#808080" stroke-width="1"><path d="M352 203.500h8M352 205.500h8M352 207.500h8M352 209.500h8"/><path d="M1348 187.500h8M1348 189.500h8M1348 191.500h8M1348 193.500h8"/></g>
<path d="M348.500 164.500l9 9M357.500 164.500l-9 9" stroke="#3c3c3c" stroke-width="2" fill="none"/>
<polygon points="5,200 10,200 10,195" fill="#333"/>
</svg>
<div class="a" id="bottom"></div>
<!-- slide -->
<div class="a" id="slide"></div>
<div class="a purple" style="left:1103px;top:174px;width:6px;height:473px"></div>
<div class="a" style="left:1109px;top:174px;width:6px;height:473px;background:#f1eff3"></div>
<div class="a purple" style="left:1115px;top:175px;width:163px;height:472px"></div>
<div class="a" style="left:1115px;top:174px;width:163px;height:1px;background:#e9e4ee"></div>
<div class="t mulu" style="top:328.8px;margin-left:-1px;transform:scale(.89,1.01)">目</div>
<div class="t mulu" style="top:420.7px;margin-left:.5px;transform:scale(.995,.97)">录</div>
<div class="a sline" style="left:520px;top:331px;width:557px"></div>
<div class="a sline" style="left:520px;top:441px;width:557px"></div>
<div class="a sline" style="left:520px;top:551px;width:557px"></div>
<div class="a pin" style="left:494px;top:273px"></div>
<div class="a pin" style="left:494px;top:383px"></div>
<div class="a pin" style="left:494px;top:493px"></div>
<div class="t pinn" style="left:493.300px;top:275.5px">1</div>
<div class="t pinn" style="left:493.300px;top:385.5px">2</div>
<div class="t pinn" style="left:493.300px;top:495.5px">3</div>
<div class="t stxt" style="left:555.2px;top:290.0px">资产管理业务概述</div>
<div class="t stxt" style="left:555.2px;top:400.0px">资管新规及相关文件解读</div>
<div class="t stxt" style="left:555.2px;top:510.0px">资管新规及相关文件对国有企业投融资的影响</div>

</body>
</html>
